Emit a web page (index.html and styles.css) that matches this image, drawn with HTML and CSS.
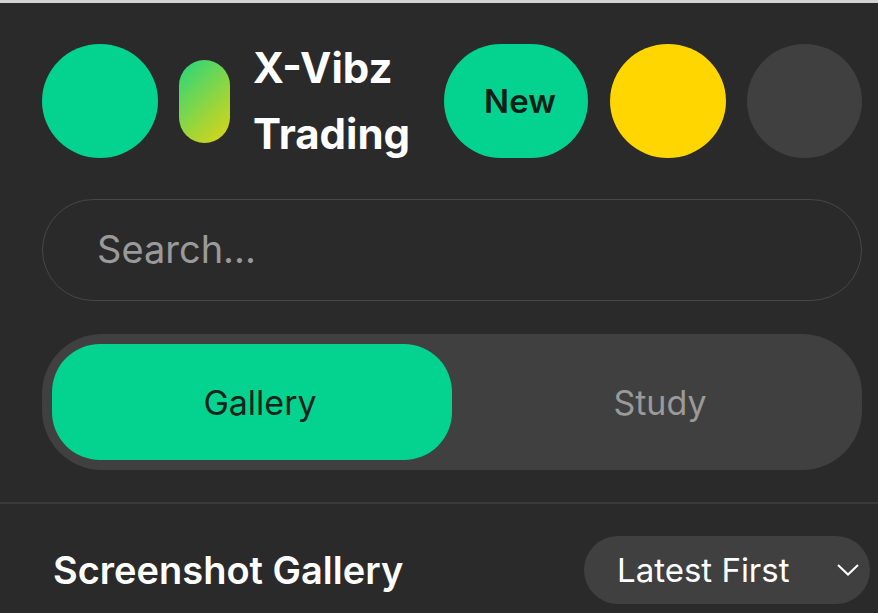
FILE: index.html
```html
<!DOCTYPE html>
<html lang="en">
<head>
<meta charset="utf-8">
<title>X-Vibz Trading</title>
<link rel="stylesheet" href="styles.css">
</head>
<body>
<div class="topline"></div>
<header class="header">
  <div class="logo-circle"></div>
  <div class="logo-pill"></div>
  <div class="brand">X-Vibz<br>Trading</div>
  <div class="btn-new">New</div>
  <div class="btn-yellow"></div>
  <div class="btn-gray"></div>
</header>
<div class="search"><span class="placeholder">Search...</span></div>
<div class="tabs">
  <div class="tab active">Gallery</div>
  <div class="tab">Study</div>
</div>
<div class="divider"></div>
<div class="gallery-head">
  <h2 class="title">Screenshot Gallery</h2>
  <div class="select">
    <span>Latest First</span>
    <svg class="chev" width="24" height="14" viewBox="0 0 24 14"><path d="M2 2 L12 11.5 L22 2" fill="none" stroke="#ffffff" stroke-width="2"/></svg>
  </div>
</div>
</body>
</html>
```
FILE: styles.css
```css
* { box-sizing: border-box; }
html, body { margin: 0; padding: 0; }
body {
  background: #2a2a2a;
  font-family: "Inter", "Noto Sans", sans-serif;
  width: 878px;
  height: 613px;
  overflow: hidden;
}
.topline { height: 3px; background: #d4d4d4; }
.header {
  display: flex;
  align-items: center;
  height: 114px;
  margin-top: 41px;
  padding-left: 42px;
}
.logo-circle {
  width: 116px; height: 114px;
  border-radius: 50%;
  background: #04d38f;
  flex: none;
}
.logo-pill {
  width: 51px; height: 83px;
  border-radius: 26px;
  background: linear-gradient(135deg, #22d77f 0%, #8fd640 55%, #e0d414 100%);
  margin-left: 21px;
  flex: none;
}
.brand {
  margin-left: 23px;
  color: #ffffff;
  font-weight: 700;
  font-size: 42px;
  line-height: 66px;
  white-space: nowrap;
  width: 191px;
  flex: none;
}
.btn-new {
  width: 144px; height: 114px;
  border-radius: 57px;
  background: #04d38f;
  color: #0f1f17;
  font-weight: 600;
  font-size: 33px;
  display: flex; align-items: center; justify-content: center;
  padding-left: 8px;
  flex: none;
}
.btn-yellow {
  width: 116px; height: 114px; border-radius: 50%;
  background: #ffd600; margin-left: 22px; flex: none;
}
.btn-gray {
  width: 115px; height: 114px; border-radius: 50%;
  background: #404040; margin-left: 21px; flex: none;
}
.search {
  margin: 41px 16px 0 42px;
  height: 102px;
  border: 1.5px solid #474747;
  border-radius: 51px;
  display: flex; align-items: center;
  padding-left: 54px;
  padding-bottom: 2px;
}
.placeholder {
  color: #9a9a9a;
  font-size: 38px;
}
.tabs {
  margin: 33px 16px 0 42px;
  height: 136px;
  background: #404040;
  border-radius: 60px;
  padding: 10px;
  display: flex;
}
.tab {
  flex: 1;
  display: flex; align-items: center; justify-content: center;
  font-size: 34px;
  color: #9a9a9a;
  border-radius: 48px;
  padding-left: 16px;
}
.tab.active {
  background: #04d38f;
  color: #14231b;
}
.divider {
  margin-top: 32px;
  height: 2px;
  background: #3a3a3a;
}
.gallery-head {
  display: flex;
  align-items: center;
  justify-content: space-between;
  padding: 32px 8px 0 53px;
}
.title {
  margin: 0;
  color: #ffffff;
  font-weight: 600;
  font-size: 38px;
}
.select {
  width: 286px; height: 68px;
  border-radius: 34px;
  background: #404040;
  display: flex; align-items: center; justify-content: space-between;
  padding: 0 10px 0 33px;
  color: #ffffff;
  font-size: 33px;
}
.chev { display: block; }
```
